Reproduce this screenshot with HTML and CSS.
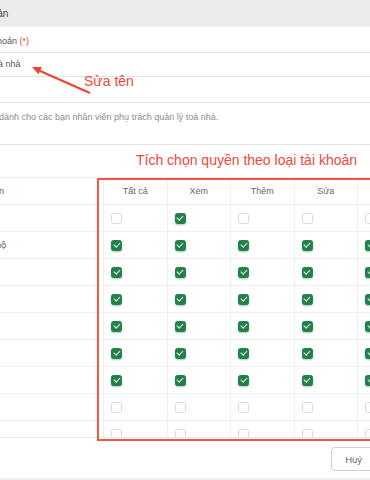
FILE: index.html
```html
<!DOCTYPE html>
<html lang="vi">
<head>
  <meta charset="UTF-8" />
  <meta name="viewport" content="width=device-width, initial-scale=1.0" />
  <title>Sửa tài khoản</title>
  <link rel="stylesheet" href="styles.css">
</head>
<body>

  <!-- Modal: sửa loại tài khoản -->
  <div class="modal">
    <div class="modal-header">Sửa tài khoản</div>

    <div class="modal-body">
      <label class="field-label">Tên loại tài khoản <span class="req">(*)</span></label>
      <div class="input">Quản lý toà nhà</div>

      <label class="field-label">Mô tả</label>
      <div class="textarea">Tài khoản dành cho các bạn nhân viên phụ trách quản lý toà nhà.</div>

      <!-- Bảng phân quyền -->
      <div class="perm-table">
        <div class="perm-row perm-head">
          <div class="perm-name">Phân quyền</div>
          <div class="perm-cell">Tất cả</div>
          <div class="perm-cell">Xem</div>
          <div class="perm-cell">Thêm</div>
          <div class="perm-cell">Sửa</div>
          <div class="perm-cell">Xoá</div>
        </div>
        <div class="perm-row">
          <div class="perm-name">Dự án</div>
          <div class="perm-cell"><span class="cb"></span></div>
          <div class="perm-cell"><span class="cb on"></span></div>
          <div class="perm-cell"><span class="cb"></span></div>
          <div class="perm-cell"><span class="cb"></span></div>
          <div class="perm-cell"><span class="cb"></span></div>
        </div>
        <div class="perm-row">
          <div class="perm-name">Thông tin hộ</div>
          <div class="perm-cell"><span class="cb on"></span></div>
          <div class="perm-cell"><span class="cb on"></span></div>
          <div class="perm-cell"><span class="cb on"></span></div>
          <div class="perm-cell"><span class="cb on"></span></div>
          <div class="perm-cell"><span class="cb on"></span></div>
        </div>
        <div class="perm-row">
          <div class="perm-name">Cư dân</div>
          <div class="perm-cell"><span class="cb on"></span></div>
          <div class="perm-cell"><span class="cb on"></span></div>
          <div class="perm-cell"><span class="cb on"></span></div>
          <div class="perm-cell"><span class="cb on"></span></div>
          <div class="perm-cell"><span class="cb on"></span></div>
        </div>
        <div class="perm-row">
          <div class="perm-name">Hóa đơn</div>
          <div class="perm-cell"><span class="cb on"></span></div>
          <div class="perm-cell"><span class="cb on"></span></div>
          <div class="perm-cell"><span class="cb on"></span></div>
          <div class="perm-cell"><span class="cb on"></span></div>
          <div class="perm-cell"><span class="cb on"></span></div>
        </div>
        <div class="perm-row">
          <div class="perm-name">Yêu cầu</div>
          <div class="perm-cell"><span class="cb on"></span></div>
          <div class="perm-cell"><span class="cb on"></span></div>
          <div class="perm-cell"><span class="cb on"></span></div>
          <div class="perm-cell"><span class="cb on"></span></div>
          <div class="perm-cell"><span class="cb on"></span></div>
        </div>
        <div class="perm-row">
          <div class="perm-name">Tin tức</div>
          <div class="perm-cell"><span class="cb on"></span></div>
          <div class="perm-cell"><span class="cb on"></span></div>
          <div class="perm-cell"><span class="cb on"></span></div>
          <div class="perm-cell"><span class="cb on"></span></div>
          <div class="perm-cell"><span class="cb on"></span></div>
        </div>
        <div class="perm-row">
          <div class="perm-name">Báo cáo</div>
          <div class="perm-cell"><span class="cb on"></span></div>
          <div class="perm-cell"><span class="cb on"></span></div>
          <div class="perm-cell"><span class="cb on"></span></div>
          <div class="perm-cell"><span class="cb on"></span></div>
          <div class="perm-cell"><span class="cb on"></span></div>
        </div>
        <div class="perm-row">
          <div class="perm-name">Phí</div>
          <div class="perm-cell"><span class="cb"></span></div>
          <div class="perm-cell"><span class="cb"></span></div>
          <div class="perm-cell"><span class="cb"></span></div>
          <div class="perm-cell"><span class="cb"></span></div>
          <div class="perm-cell"><span class="cb"></span></div>
        </div>
        <div class="perm-row">
          <div class="perm-name">Xe</div>
          <div class="perm-cell"><span class="cb"></span></div>
          <div class="perm-cell"><span class="cb"></span></div>
          <div class="perm-cell"><span class="cb"></span></div>
          <div class="perm-cell"><span class="cb"></span></div>
          <div class="perm-cell"><span class="cb"></span></div>
        </div>
      </div>
    </div>

    <div class="modal-footer">
      <button class="btn">Huỷ</button>
      <button class="btn btn-primary">Lưu</button>
    </div>
  </div>

  <!-- Chú thích màu đỏ vẽ đè lên ảnh -->
  <div class="note note-name">Sửa tên</div>
  <div class="note note-perm">Tích chọn quyền theo loại tài khoản</div>
  <svg class="note-arrow" width="66" height="38" viewBox="0 0 66 38">
    <line x1="62" y1="33" x2="11" y2="10.5" stroke="#f2412f" stroke-width="2" />
    <polygon points="4,7 13.8,7 10.6,14.3" fill="#f2412f" />
  </svg>
  <div class="note-box"></div>

</body>
</html>
```

FILE: styles.css
```css
:root {
  --line: #ebebeb;
  --text: #555;
  --green: #24804a;
  --note-red: #f2473a;
}

body {
  margin: 0;
  width: 370px;
  height: 480px;
  overflow: hidden;
  position: relative;
  background: #efefef;
  font-family: "Liberation Sans", Arial, sans-serif;
  color: var(--text);
}

/* modal is wider than the window, the left part is cut off */
.modal {
  margin-left: -69px;
  width: 511px;
  background: #fff;
}

.modal-header {
  height: 27px;
  line-height: 27px;
  padding-left: 15px;
  background: #ececec;
  font-size: 10px;
  color: #444;
}

.modal-body {
  padding: 0 15px;
}

.field-label {
  display: block;
  padding: 9px 0 5px;
  font-size: 9px;
  line-height: 11px;
  color: var(--text);
}

.req {
  color: #e8453c;
}

.input {
  box-sizing: border-box;
  height: 25px;
  line-height: 23px;
  padding: 0 10px;
  border: 1px solid #e3e3e3;
  font-size: 9px;
  color: #555;
}

.textarea {
  box-sizing: border-box;
  height: 43px;
  padding: 9px 10px;
  line-height: 11px;
  border: 1px solid #e3e3e3;
  font-size: 9px;
  color: #8a8a8a;
}

/* permission table */
.perm-table {
  box-sizing: border-box;
  margin-top: 32px;
  height: 261px;
  overflow: hidden;
  border-top: 1px solid var(--line);
  border-bottom: 1px solid var(--line);
}

.perm-row {
  box-sizing: border-box;
  display: grid;
  grid-template-columns: 157px repeat(4, 63.5px) 1fr;
  height: 27px;
  border-bottom: 1px solid #efefef;
  font-size: 9px;
}

.perm-name {
  display: flex;
  align-items: center;
  padding-left: 10px;
}

.perm-cell {
  display: flex;
  align-items: center;
  padding-left: 7px;
  border-left: 1px solid #efefef;
}

.perm-head .perm-cell {
  justify-content: center;
  padding-left: 0;
  color: #666;
}

.cb {
  box-sizing: border-box;
  width: 11px;
  height: 11px;
  display: flex;
  align-items: center;
  justify-content: center;
  border: 1px solid #dadada;
  border-radius: 2.5px;
  background: #fff;
}

.cb.on {
  background: var(--green);
  border-color: var(--green);
  box-shadow: 0 1px 2px rgba(36, 128, 74, 0.4);
}

.cb.on::after {
  content: "";
  width: 2.5px;
  height: 5px;
  border: solid #e8f3ec;
  border-width: 0 1.3px 1.3px 0;
  transform: translateY(-1px) rotate(45deg);
}

.modal-footer {
  display: flex;
  justify-content: flex-end;
  gap: 6px;
  padding: 9px 15px 7px;
}

.btn {
  height: 24px;
  padding: 0 13px;
  border: 1px solid #cfcfcf;
  border-radius: 4px;
  background: #fff;
  font-family: "Liberation Sans", Arial, sans-serif;
  font-size: 9.5px;
  color: #666;
}

.btn-primary {
  background: var(--green);
  border-color: var(--green);
  color: #fff;
}

/* red annotations drawn over the screenshot */
.note {
  position: absolute;
  color: var(--note-red);
  font-size: 14px;
  line-height: 18px;
  white-space: nowrap;
}

.note-name {
  left: 84px;
  top: 72px;
}

.note-perm {
  left: 136px;
  top: 151px;
}

.note-arrow {
  position: absolute;
  left: 28px;
  top: 60px;
}

.note-box {
  position: absolute;
  box-sizing: border-box;
  left: 97px;
  top: 178px;
  width: 300px;
  height: 263px;
  border: 2px solid #f2563f;
}
```
